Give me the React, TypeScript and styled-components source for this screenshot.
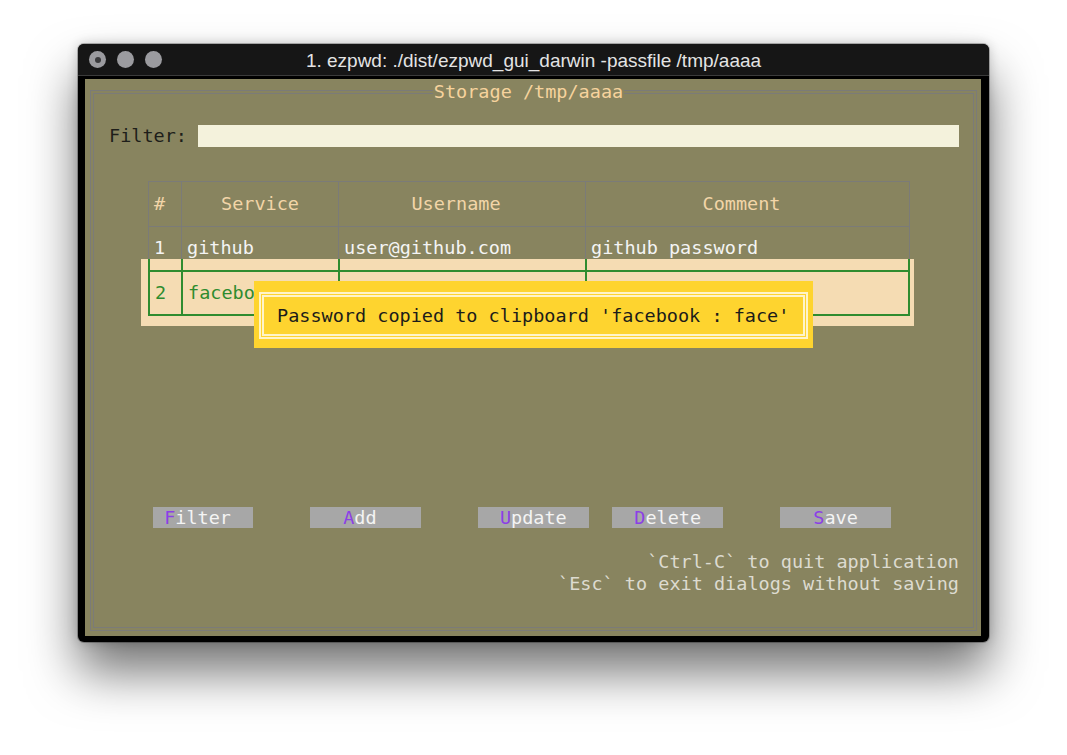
import styled, { createGlobalStyle } from "styled-components";

const GlobalStyle = createGlobalStyle`
  html, body {
    margin: 0;
    background: #ffffff;
  }
  body {
    font-family: "DejaVu Sans Mono", monospace;
  }
`;

const GRAY = "#7b7b78";
const GREEN = "#2f8c2f";

const Page = styled.div`
  box-sizing: border-box;
  height: 755px;
  padding: 44px 0 0 78px;
`;

const Window = styled.div`
  width: 911px;
  height: 598px;
  background: #000;
  border-radius: 6px;
  box-shadow: 0 30px 50px rgba(0, 0, 0, 0.55), 0 0 12px rgba(0, 0, 0, 0.2),
    0 0 0 1px rgba(0, 0, 0, 0.25);
  display: flex;
  flex-direction: column;
  overflow: hidden;
`;

const TitleBar = styled.div`
  height: 31px;
  background: #161616;
  border-bottom: 1px solid #3b3b3b;
  display: grid;
  grid-template-columns: 1fr auto 1fr;
  align-items: center;
`;

const Lights = styled.div`
  display: flex;
  gap: 11px;
  padding-left: 11px;
`;

const Light = styled.span<{ $dot?: boolean }>`
  width: 17px;
  height: 17px;
  border-radius: 50%;
  background: #9b9b9f;
  display: flex;
  align-items: center;
  justify-content: center;

  &::after {
    content: "";
    display: ${p => (p.$dot ? "block" : "none")};
    width: 6px;
    height: 6px;
    border-radius: 50%;
    background: #3a3a3c;
  }
`;

const TitleText = styled.div`
  font-family: "Liberation Sans", Arial, sans-serif;
  font-size: 19px;
  color: #e4e4e4;
  padding-top: 2px;
`;

const Body = styled.div`
  flex: 1;
  display: flex;
  padding: 3px 8px 6px 7px;
`;

const Terminal = styled.div`
  flex: 1;
  display: flex;
  background: #88845f;
  padding: 11px 4px 5px 5px;
  font-family: "DejaVu Sans Mono", monospace;
  font-size: 18.5px;
  line-height: 22.4px;
  white-space: pre;
`;

const Frame = styled.div`
  flex: 1;
  display: flex;
  flex-direction: column;
  border: 4px double ${GRAY};
`;

const TitleRow = styled.div`
  display: flex;
  justify-content: center;
  padding-right: 10px;
  margin-top: -13.2px;
`;

const FrameTitle = styled.span`
  background: #88845f;
  color: #f6d39d;
  padding: 0 1px;
`;

const FilterRow = styled.div`
  display: flex;
  align-items: center;
  margin-top: 21.8px;
  padding: 0 14px 0 15px;
`;

const FilterLabel = styled.span`
  color: #1e1e1a;
  line-height: 22px;
`;

const FilterInput = styled.div`
  flex: 1;
  height: 22px;
  background: #f4f2dc;
`;

const TableArea = styled.div`
  position: relative;
  width: 773px;
  margin: 34px 0 0 47px;
`;

const Grid = styled.div<{
  $line: string;
  $w: number;
  $h: number;
  $top?: boolean;
  $bottom?: boolean;
  $inset?: boolean;
}>`
  box-sizing: border-box;
  display: grid;
  grid-template-columns: 33px 157px 247px 324px;
  height: ${p => p.$h}px;
  margin: ${p => (p.$inset ? "0 4px 0 7px" : "0")};
  border-right: ${p => p.$w}px solid ${p => p.$line};
  border-top: ${p => (p.$top ? `${p.$w}px solid ${p.$line}` : "none")};
  border-bottom: ${p => (p.$bottom ? `${p.$w}px solid ${p.$line}` : "none")};
`;

const Cell = styled.div<{
  $line: string;
  $w: number;
  $color?: string;
  $align?: "left" | "center";
  $nudge?: number;
  $valign?: "start" | "center";
}>`
  box-sizing: border-box;
  display: flex;
  align-items: ${p => (p.$valign === "start" ? "flex-start" : "center")};
  justify-content: ${p => (p.$align === "center" ? "center" : "flex-start")};
  padding: ${p => (p.$valign === "start" ? "10px" : "0")} ${p => p.$nudge ?? 0}px 0
    ${p => (p.$align === "center" ? 0 : 5)}px;
  border-left: ${p => p.$w}px solid ${p => p.$line};
  color: ${p => p.$color ?? "#f4f4f4"};
  overflow: hidden;
`;

const SelectBlock = styled.div`
  background: #f5dcb3;
  padding: 0 4px 10px 7px;
`;

const Popup = styled.div`
  position: absolute;
  left: 113px;
  top: 100px;
  box-sizing: border-box;
  width: 559px;
  height: 67px;
  padding: 11px 5px 9px 5px;
  background: #fed42f;
`;

const PopupInner = styled.div`
  box-sizing: border-box;
  height: 100%;
  display: flex;
  align-items: center;
  padding: 1px 0 0 13px;
  border: 5px double #fff4c8;
  color: #1c1c1a;
`;

const ButtonRow = styled.div`
  display: flex;
  margin-top: 181px;
  padding-left: 59px;
`;

const Button = styled.span<{ $gap: number }>`
  margin-left: ${p => p.$gap}px;
  height: 21px;
  line-height: 21px;
  background: #a7a7a7;
  color: #f4f4f4;
`;

const Hotkey = styled.span`
  color: #8c3fe6;
`;

const Help = styled.div`
  margin-top: 23px;
  padding-right: 14px;
  text-align: right;
  color: #dddbd0;
`;

const headers = [
  { label: "#", align: "left" as const, nudge: 0 },
  { label: "Service", align: "center" as const, nudge: 0 },
  { label: "Username", align: "center" as const, nudge: 12 },
  { label: "Comment", align: "center" as const, nudge: 12 },
];

const buttons = [
  { pre: " ", key: "F", rest: "ilter  ", gap: 0 },
  { pre: "   ", key: "A", rest: "dd    ", gap: 56.5 },
  { pre: "  ", key: "U", rest: "pdate  ", gap: 56.5 },
  { pre: "  ", key: "D", rest: "elete  ", gap: 23 },
  { pre: "   ", key: "S", rest: "ave   ", gap: 56.5 },
];

const App = () => (
  <Page>
    <GlobalStyle />
    <Window>
      <TitleBar>
        <Lights>
          <Light $dot />
          <Light />
          <Light />
        </Lights>
        <TitleText>1. ezpwd: ./dist/ezpwd_gui_darwin -passfile /tmp/aaaa</TitleText>
        <div />
      </TitleBar>
      <Body>
        <Terminal>
          <Frame>
            <TitleRow>
              <FrameTitle>Storage /tmp/aaaa</FrameTitle>
            </TitleRow>

            <FilterRow>
              <FilterLabel>Filter: </FilterLabel>
              <FilterInput />
            </FilterRow>

            <TableArea>
              <Grid $line={GRAY} $w={1} $h={46} $top $bottom $inset>
                {headers.map(h => (
                  <Cell
                    key={h.label}
                    $line={GRAY}
                    $w={1}
                    $color="#f2d5a8"
                    $align={h.align}
                    $nudge={h.nudge}
                  >
                    {h.label}
                  </Cell>
                ))}
              </Grid>
              <Grid $line={GRAY} $w={1} $h={32} $inset>
                {["1", "github", "user@github.com", "github password"].map(v => (
                  <Cell key={v} $line={GRAY} $w={1} $valign="start">
                    {v}
                  </Cell>
                ))}
              </Grid>

              <SelectBlock>
                <Grid $line={GREEN} $w={2} $h={11}>
                  {[0, 1, 2, 3].map(i => (
                    <Cell key={i} $line={GREEN} $w={2} />
                  ))}
                </Grid>
                <Grid $line={GREEN} $w={2} $h={46} $top $bottom>
                  {["2", "facebook", "user@facebook.com", "facebook password"].map(v => (
                    <Cell key={v} $line={GREEN} $w={2} $color={GREEN}>
                      {v}
                    </Cell>
                  ))}
                </Grid>
              </SelectBlock>

              <Popup>
                <PopupInner>Password copied to clipboard 'facebook : face'</PopupInner>
              </Popup>
            </TableArea>

            <ButtonRow>
              {buttons.map(b => (
                <Button key={b.key} $gap={b.gap}>
                  {b.pre}
                  <Hotkey>{b.key}</Hotkey>
                  {b.rest}
                </Button>
              ))}
            </ButtonRow>

            <Help>
              <div>`Ctrl-C` to quit application</div>
              <div>`Esc` to exit dialogs without saving</div>
            </Help>
          </Frame>
        </Terminal>
      </Body>
    </Window>
  </Page>
);

export default App;
